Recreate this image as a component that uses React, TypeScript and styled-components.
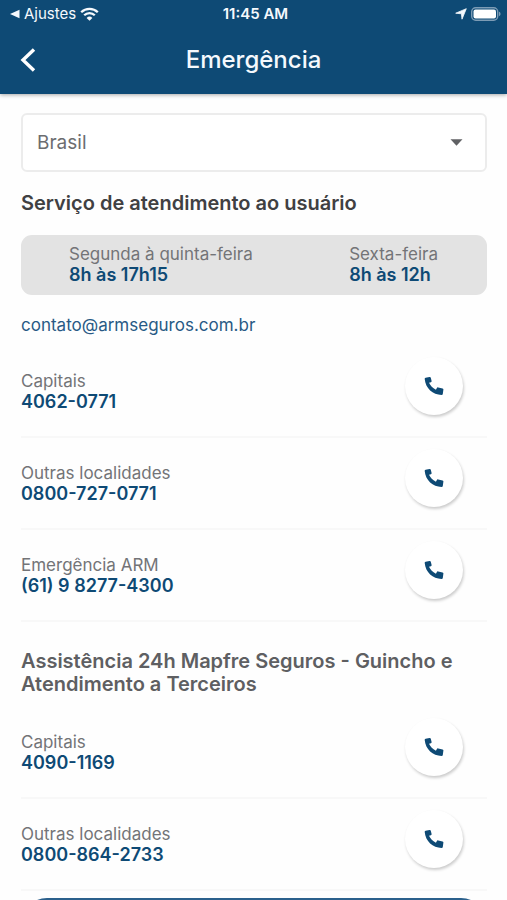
import React from "react";
import styled, { createGlobalStyle } from "styled-components";

const navy = "#0e4a75";

const GlobalStyle = createGlobalStyle`
  *, *::before, *::after { box-sizing: border-box; }
  body {
    margin: 0;
    background: #fefefe;
    font-family: Inter, "Liberation Sans", sans-serif;
  }
  button, select { font: inherit; }
`;

const Screen = styled.div`
  display: flex;
  flex-direction: column;
  height: 100vh;
  overflow: hidden;
`;

const Header = styled.header`
  flex: none;
  background: ${navy};
  color: #f5f9fd;
  box-shadow: 0 1px 4px rgba(0, 0, 0, 0.35);
`;

const StatusBar = styled.div`
  display: grid;
  grid-template-columns: 1fr auto 1fr;
  align-items: center;
  height: 28px;
  padding: 0 6px 0 10px;
  font-size: 15px;
  line-height: 20px;
`;

const StatusGroup = styled.div<{ $end?: boolean }>`
  display: flex;
  align-items: center;
  justify-content: ${(p) => (p.$end ? "flex-end" : "flex-start")};
  gap: 4px;
`;

const Clock = styled.time`
  font-weight: 600;
`;

const TitleBar = styled.div`
  display: grid;
  grid-template-columns: 48px 1fr 48px;
  align-items: center;
  height: 66px;
  padding: 0 4px 2px;
`;

const BackButton = styled.button`
  display: flex;
  align-items: center;
  justify-content: center;
  height: 48px;
  padding: 0;
  border: 0;
  background: none;
  color: #fff;
`;

const Title = styled.h1`
  margin: 0;
  font-size: 24px;
  line-height: 32px;
  font-weight: 500;
  text-align: center;
`;

const Content = styled.main`
  flex: 1;
  min-height: 0;
  overflow: hidden;
  padding: 19px 20px 0 21px;
`;

const SelectField = styled.label`
  display: grid;
  align-items: center;
  height: 59px;
  border: 2px solid #ececec;
  border-radius: 6px;
  background: #fff;

  > * { grid-area: 1 / 1; }
  > svg {
    justify-self: end;
    margin-right: 22px;
    pointer-events: none;
  }
`;

const CountrySelect = styled.select`
  appearance: none;
  width: 100%;
  height: 100%;
  padding: 0 48px 0 14px;
  border: 0;
  background: none;
  color: #6c6d70;
  font-size: 19px;
`;

const Heading = styled.h2<{ $muted?: boolean }>`
  margin: ${(p) => (p.$muted ? "28px 0 11px" : "20px 0 20px")};
  color: ${(p) => (p.$muted ? "#5e5f62" : "#404042")};
  font-size: 20px;
  line-height: 23px;
  font-weight: 600;
`;

const Hours = styled.div`
  display: flex;
  justify-content: space-between;
  padding: 9px 49px 10px 48px;
  border-radius: 11px;
  background: #e3e3e3;
`;

const Label = styled.div`
  color: #737477;
  font-size: 17px;
  line-height: 21px;
`;

const Value = styled.div`
  color: ${navy};
  font-size: 18px;
  line-height: 20px;
  font-weight: 600;
`;

const Email = styled.a`
  display: block;
  width: fit-content;
  margin: 19px 0 10px;
  color: #285a85;
  font-size: 17px;
  line-height: 22px;
  text-decoration: none;
`;

const Row = styled.div`
  display: flex;
  align-items: center;
  justify-content: space-between;
  height: 92px;
  padding-right: 24px;
  border-bottom: 2px solid #f8f8f8;
`;

const CallButton = styled.button`
  display: flex;
  align-items: center;
  justify-content: center;
  flex: none;
  width: 58px;
  height: 58px;
  margin-bottom: 10px;
  padding: 0;
  border: 0;
  border-radius: 50%;
  background: #fff;
  color: ${navy};
  box-shadow: 1px 2px 3px rgba(0, 0, 0, 0.2);
`;

const BottomButton = styled.button`
  display: block;
  width: 100%;
  height: 52px;
  margin-top: 7px;
  border: 0;
  border-radius: 26px;
  background: #2b608c;
`;

const WifiIcon = () => (
  <svg width="19" height="14" viewBox="0 0 19 14" fill="none" stroke="currentColor" aria-hidden="true">
    <path d="M1.2 5.2a11.8 11.8 0 0 1 16.6 0" strokeWidth="2.3" />
    <path d="M4.2 8.3a7.5 7.5 0 0 1 10.6 0" strokeWidth="2.3" />
    <path d="M9.5 13.8 6.6 10.9a4.1 4.1 0 0 1 5.8 0Z" fill="currentColor" stroke="none" />
  </svg>
);

const PhoneIcon = () => (
  <svg width="20" height="20" viewBox="0 0 20 20" fill="currentColor" aria-hidden="true">
    <path d="M1.600 1.700 5.500.900c.7-.1 1.100.1 1.300.8l.8 3.300c.1.6-.1 1-.7 1.200l-1.900.6c1.400 3 3.600 5.300 6.900 6.900l1-1.800c.3-.5.700-.7 1.300-.5l4.400 1c.600.2.9.5.8 1.200l-.6 4.300c-.1.700-.5 1.100-1.200 1.100C8.800 18.700 1.500 12.400.700 3c0-.7.2-1.100.900-1.300Z" />
  </svg>
);

interface Contact {
  name: string;
  phone: string;
}

const service: Contact[] = [
  { name: "Capitais", phone: "4062-0771" },
  { name: "Outras localidades", phone: "0800-727-0771" },
  { name: "Emergência ARM", phone: "(61) 9 8277-4300" },
];

const assistance: Contact[] = [
  { name: "Capitais", phone: "4090-1169" },
  { name: "Outras localidades", phone: "0800-864-2733" },
];

const ContactRow = ({ name, phone }: Contact) => (
  <Row>
    <div>
      <Label>{name}</Label>
      <Value>{phone}</Value>
    </div>
    <CallButton aria-label={`Ligar para ${phone}`}>
      <PhoneIcon />
    </CallButton>
  </Row>
);

export default function App() {
  return (
    <Screen>
      <GlobalStyle />
      <Header>
        <StatusBar>
          <StatusGroup>
            <svg width="10" height="10" viewBox="0 0 10 10" fill="currentColor" aria-hidden="true">
              <path d="M0 5 9.500.700v8.600Z" />
            </svg>
            <span>Ajustes</span>
            <WifiIcon />
          </StatusGroup>
          <Clock>11:45 AM</Clock>
          <StatusGroup $end>
            <svg width="12" height="12" viewBox="0 0 12 12" fill="currentColor" stroke="currentColor" strokeWidth=".8" strokeLinejoin="round" aria-hidden="true">
              <path d="M11.300.700 7 11.200 6.400 5.800.700 5.200Z" />
            </svg>
            <svg width="30" height="14" viewBox="0 0 30 14" aria-hidden="true">
              <rect x=".7" y=".7" width="26" height="12.600" rx="4" fill="none" stroke="#7d9cb5" strokeWidth="1.400" />
              <rect x="2.500" y="2.500" width="22.500" height="9" rx="2" fill="#fff" />
              <path d="M28 4.800c2 .6 2 3.800 0 4.400Z" fill="#7d9cb5" />
            </svg>
          </StatusGroup>
        </StatusBar>
        <TitleBar>
          <BackButton aria-label="Voltar">
            <svg width="16" height="26" viewBox="0 0 16 26" fill="none" stroke="currentColor" strokeWidth="3.400" aria-hidden="true">
              <path d="M14 2.500 3 13l11 10.500" />
            </svg>
          </BackButton>
          <Title>Emergência</Title>
        </TitleBar>
      </Header>
      <Content>
        <SelectField>
          <CountrySelect aria-label="País" defaultValue="Brasil">
            <option>Brasil</option>
          </CountrySelect>
          <svg width="13" height="7" viewBox="0 0 13 7" fill="#606164" aria-hidden="true">
            <path d="M.500.300h12l-6 6.400Z" />
          </svg>
        </SelectField>
        <Heading>Serviço de atendimento ao usuário</Heading>
        <Hours>
          <div>
            <Label>Segunda à quinta-feira</Label>
            <Value>8h às 17h15</Value>
          </div>
          <div>
            <Label>Sexta-feira</Label>
            <Value>8h às 12h</Value>
          </div>
        </Hours>
        <Email href="mailto:contato@armseguros.com.br">contato@armseguros.com.br</Email>
        {service.map((c) => (
          <ContactRow key={c.phone} {...c} />
        ))}
        <Heading $muted>Assistência 24h Mapfre Seguros - Guincho e Atendimento a Terceiros</Heading>
        {assistance.map((c) => (
          <ContactRow key={c.phone} {...c} />
        ))}
        <BottomButton aria-label="Mais opções" />
      </Content>
    </Screen>
  );
}
